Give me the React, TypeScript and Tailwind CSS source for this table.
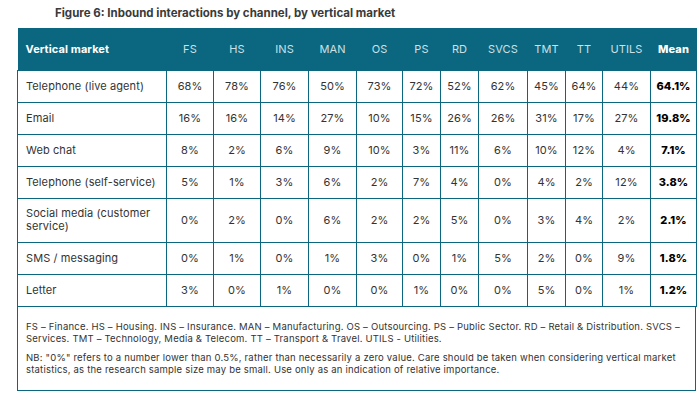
const cols = ["FS", "HS", "INS", "MAN", "OS", "PS", "RD", "SVCS", "TMT", "TT", "UTILS"];
const widths = [149, 47, 47, 48, 48, 46, 38, 38, 49, 38, 37, 48, 46];

const rows: { label: string; values: string[]; mean: string; tall?: boolean }[] = [
  { label: "Telephone (live agent)", values: ["68%", "78%", "76%", "50%", "73%", "72%", "52%", "62%", "45%", "64%", "44%"], mean: "64.1%" },
  { label: "Email", values: ["16%", "16%", "14%", "27%", "10%", "15%", "26%", "26%", "31%", "17%", "27%"], mean: "19.8%" },
  { label: "Web chat", values: ["8%", "2%", "6%", "9%", "10%", "3%", "11%", "6%", "10%", "12%", "4%"], mean: "7.1%" },
  { label: "Telephone (self-service)", values: ["5%", "1%", "3%", "6%", "2%", "7%", "4%", "0%", "4%", "2%", "12%"], mean: "3.8%" },
  { label: "Social media (customer service)", values: ["0%", "2%", "0%", "6%", "2%", "2%", "5%", "0%", "3%", "4%", "2%"], mean: "2.1%", tall: true },
  { label: "SMS / messaging", values: ["0%", "1%", "0%", "1%", "3%", "0%", "1%", "5%", "2%", "0%", "9%"], mean: "1.8%" },
  { label: "Letter", values: ["3%", "0%", "1%", "0%", "0%", "1%", "0%", "0%", "5%", "0%", "1%"], mean: "1.2%" },
];

export default function App() {
  return (
    <div
      className="w-[699px] h-[400px] bg-white text-[#333] overflow-hidden"
      style={{ fontFamily: "Inter, 'DejaVu Sans', sans-serif" }}
    >
      <h1 className="pl-[55px] pt-[6px] h-[28px] text-[11.5px] font-bold text-[#3a3a3a] leading-[14px]">
        Figure 6: Inbound interactions by channel, by vertical market
      </h1>
      <div className="ml-[17px] w-[679px]">
        <table className="w-[679px] table-fixed border-collapse text-[11px] tracking-[0.1px]">
          <colgroup>
            {widths.map((w, i) => (
              <col key={i} style={{ width: w }} />
            ))}
          </colgroup>
          <thead>
            <tr className="h-[42px] bg-[#0b6780]">
              <th className="pl-[8px] text-left font-bold text-white">Vertical market</th>
              {cols.map((c) => (
                <th key={c} className="font-normal text-[#cde0e6]">
                  {c}
                </th>
              ))}
              <th className="font-extrabold text-white">Mean</th>
            </tr>
          </thead>
          <tbody>
            {rows.map((r) => (
              <tr key={r.label} className={r.tall ? "h-[44px]" : "h-[32px]"}>
                <td className="border border-[#0b6780] pl-[8px] pr-[4px] text-left leading-[13px]">
                  {r.label}
                </td>
                {r.values.map((v, i) => (
                  <td key={i} className="border border-[#0b6780] text-center">
                    {v}
                  </td>
                ))}
                <td className="border border-[#0b6780] text-center font-extrabold text-black">{r.mean}</td>
              </tr>
            ))}
          </tbody>
        </table>
        <div className="h-[84px] border border-t-0 border-[#0b6780] pl-[8px] pr-[4px] pt-[14px] text-[9.5px] tracking-[0.2px] leading-[12.5px]">
          <p>
            FS – Finance. HS – Housing. INS – Insurance. MAN – Manufacturing. OS – Outsourcing. PS – Public Sector. RD –
            Retail &amp; Distribution. SVCS – Services. TMT – Technology, Media &amp; Telecom. TT – Transport &amp; Travel.
            UTILS - Utilities.
          </p>
          <p className="mt-[6px]">
            NB: "0%" refers to a number lower than 0.5%, rather than necessarily a zero value. Care should be taken when
            considering vertical market statistics, as the research sample size may be small. Use only as an indication
            of relative importance.
          </p>
        </div>
      </div>
    </div>
  );
}
